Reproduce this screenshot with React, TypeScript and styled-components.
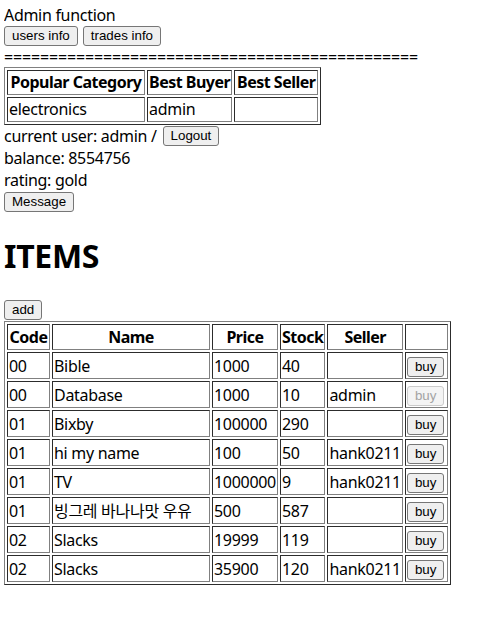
import styled, { createGlobalStyle } from "styled-components";

const GlobalStyle = createGlobalStyle`
  body {
    margin: 4px;
    font-family: "Noto Sans", "Noto Sans CJK KR", sans-serif;
    font-size: 16px;
    line-height: 22px;
    letter-spacing: -0.3px;
    color: #000;
    background: #fff;
  }
`;

const Row = styled.div<{ $gap?: number; $h?: number }>`
  display: flex;
  align-items: center;
  gap: ${(p) => p.$gap ?? 5}px;
  height: ${(p) => p.$h ?? 22}px;
`;

const Button = styled.button`
  font-family: "Liberation Sans", Arial, sans-serif;
  font-size: 13.33px;
  letter-spacing: 0;
  line-height: 16px;
  height: 20px;
  padding: 1px 7px;
  color: ${(p) => (p.disabled ? "#a3a3a3" : "#000")};
  background: ${(p) => (p.disabled ? "#f4f4f4" : "#efefef")};
  border: 1px solid ${(p) => (p.disabled ? "#cbcbcb" : "#767676")};
  border-radius: 3px;
`;

const Divider = styled.div`
  height: 21px;
  white-space: nowrap;
  letter-spacing: -0.15px;
`;

const Table = styled.table<{ $lh: number }>`
  border: 1px outset #808080;
  border-spacing: 2px;
  border-collapse: separate;
  line-height: ${(p) => p.$lh}px;
`;

const Th = styled.th<{ $w?: number }>`
  border: 1px inset #808080;
  padding: 1px;
  font-weight: bold;
  letter-spacing: -0.5px;
  text-align: center;
  white-space: nowrap;
  width: ${(p) => (p.$w ? `${p.$w}px` : "auto")};
`;

const Td = styled.td`
  border: 1px inset #808080;
  padding: 1px;
  text-align: left;
  white-space: nowrap;
`;

const ItemTd = styled(Td)`
  height: 23px;
`;

const Heading = styled.h1`
  font-size: 32px;
  line-height: 44px;
  font-weight: bold;
  letter-spacing: -0.3px;
  margin: 21px 0;
`;

type Item = {
  code: string;
  name: string;
  price: string;
  stock: string;
  seller: string;
};

const items: Item[] = [
  { code: "00", name: "Bible", price: "1000", stock: "40", seller: "" },
  { code: "00", name: "Database", price: "1000", stock: "10", seller: "admin" },
  { code: "01", name: "Bixby", price: "100000", stock: "290", seller: "" },
  { code: "01", name: "hi my name", price: "100", stock: "50", seller: "hank0211" },
  { code: "01", name: "TV", price: "1000000", stock: "9", seller: "hank0211" },
  { code: "01", name: "빙그레 바나나맛 우유", price: "500", stock: "587", seller: "" },
  { code: "02", name: "Slacks", price: "19999", stock: "119", seller: "" },
  { code: "02", name: "Slacks", price: "35900", stock: "120", seller: "hank0211" },
];

const currentUser = "admin";

export default function App() {
  return (
    <>
      <GlobalStyle />
      <div>Admin function</div>
      <Row $h={20}>
        <Button>users info</Button>
        <Button>trades info</Button>
      </Row>
      <Divider>{"=".repeat(46)}</Divider>
      <Table $lh={21}>
        <thead>
          <tr>
            <Th $w={134}>Popular Category</Th>
            <Th $w={81}>Best Buyer</Th>
            <Th $w={80}>Best Seller</Th>
          </tr>
        </thead>
        <tbody>
          <tr>
            <Td>electronics</Td>
            <Td>admin</Td>
            <Td></Td>
          </tr>
        </tbody>
      </Table>
      <Row $gap={6}>
        <span>current user: {currentUser} /</span>
        <Button>Logout</Button>
      </Row>
      <div>balance: 8554756</div>
      <div>rating: gold</div>
      <Row>
        <Button>Message</Button>
      </Row>
      <Heading>ITEMS</Heading>
      <Row>
        <Button>add</Button>
      </Row>
      <Table $lh={22}>
        <thead>
          <tr>
            <Th $w={39}>Code</Th>
            <Th $w={154}>Name</Th>
            <Th $w={62}>Price</Th>
            <Th $w={39}>Stock</Th>
            <Th $w={70}>Seller</Th>
            <Th $w={39}></Th>
          </tr>
        </thead>
        <tbody>
          {items.map((it, i) => (
            <tr key={i}>
              <ItemTd>{it.code}</ItemTd>
              <ItemTd>{it.name}</ItemTd>
              <ItemTd>{it.price}</ItemTd>
              <ItemTd>{it.stock}</ItemTd>
              <ItemTd>{it.seller}</ItemTd>
              <ItemTd>
                <Button disabled={it.seller === currentUser}>buy</Button>
              </ItemTd>
            </tr>
          ))}
        </tbody>
      </Table>
    </>
  );
}
